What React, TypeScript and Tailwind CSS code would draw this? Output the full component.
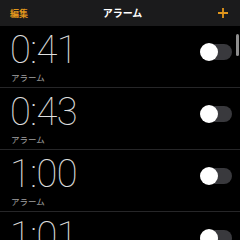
const alarms = ["0:41", "0:43", "1:00", "1:01"];

function Toggle() {
  return (
    <div className="relative h-[16px] w-[31px] shrink-0 rounded-full bg-[#39393d]">
      <div className="absolute left-[-1px] top-[-1px] h-[18px] w-[18px] rounded-full bg-white" />
    </div>
  );
}

function AlarmRow({ time }: { time: string }) {
  return (
    <div className="flex h-[62px] items-start border-b border-[#262628] pl-[10px] pr-[8px]">
      <div className="flex-1 pt-[2px]">
        <div className="font-['Roboto',sans-serif] text-[38px] font-thin leading-[44px] tracking-[-0.5px] text-[#e0e0e0]">
          {time}
        </div>
        <div className="pl-[1px] font-['Noto_Sans_CJK_JP',sans-serif] text-[8.5px] leading-[10px] text-[#a0a0a0]">
          アラーム
        </div>
      </div>
      <div className="pt-[18px]">
        <Toggle />
      </div>
    </div>
  );
}

export default function App() {
  return (
    <div className="relative h-[240px] w-[240px] overflow-hidden bg-black">
      <div className="flex h-[26px] items-center justify-between bg-[#1b1b1c] px-[10px] font-['Noto_Sans_CJK_JP',sans-serif]">
        <span className="text-[9px] font-bold leading-none text-[#e0961c]">編集</span>
        <span className="text-[10px] font-bold leading-none text-white">アラーム</span>
        <svg width="12" height="12" viewBox="0 0 12 12" className="mr-[1px]">
          <path d="M6 1v10M1 6h10" stroke="#e0961c" strokeWidth="1.8" />
        </svg>
      </div>
      <div>
        {alarms.map((t) => (
          <AlarmRow key={t} time={t} />
        ))}
      </div>
      <div className="absolute left-[236px] top-[34px] h-[22px] w-[3px] rounded-full bg-[#8e8e8e]" />
    </div>
  );
}
